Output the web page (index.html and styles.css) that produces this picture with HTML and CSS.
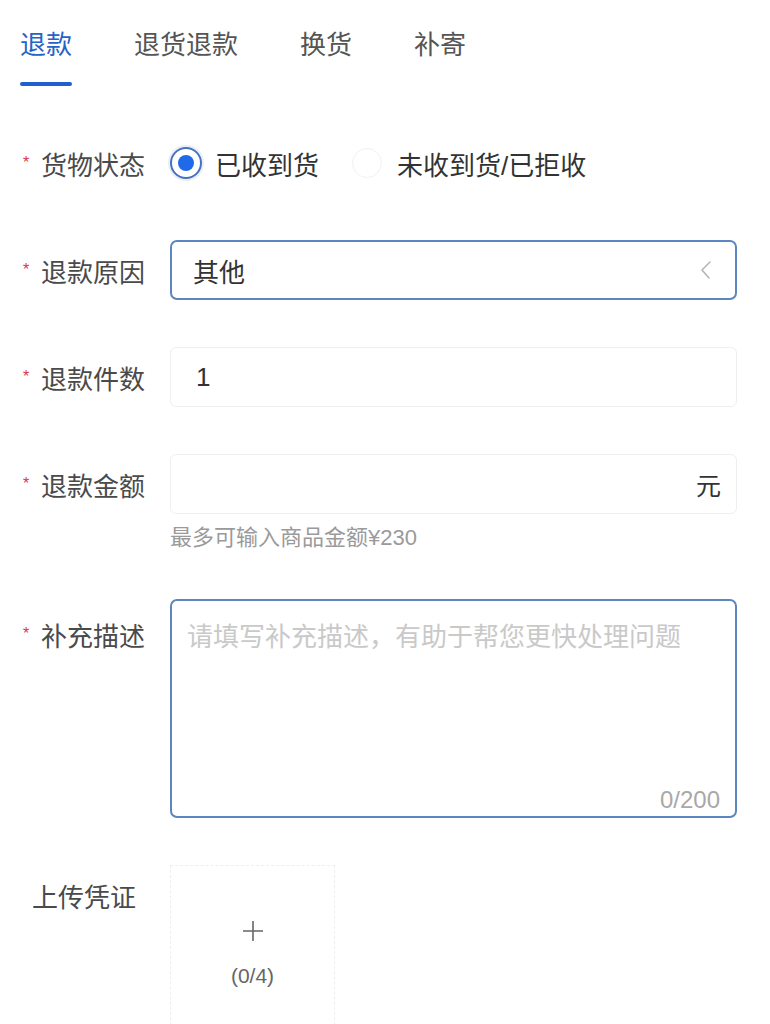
FILE: index.html
```html
<!DOCTYPE html>
<html lang="zh-CN">
<head>
<meta charset="utf-8">
<title>申请售后</title>
<link rel="stylesheet" href="styles.css">
</head>
<body>
<div class="page">
  <nav class="tabs">
    <div class="tab active">退款</div>
    <div class="tab">退货退款</div>
    <div class="tab">换货</div>
    <div class="tab">补寄</div>
  </nav>

  <form class="form">
    <div class="row">
      <div class="label"><i class="star">*</i>货物状态</div>
      <div class="control radios">
        <span class="radio checked"><span class="dot"></span>已收到货</span>
        <span class="radio"><span class="dot"></span>未收到货/已拒收</span>
      </div>
    </div>

    <div class="row">
      <div class="label"><i class="star">*</i>退款原因</div>
      <div class="control">
        <div class="select">
          <span>其他</span>
          <svg class="chev" width="12" height="20" viewBox="0 0 12 20"><polyline points="10,2 2,10 9,18" fill="none" stroke="#b5b5b5" stroke-width="1.6" stroke-linecap="round" stroke-linejoin="round"/></svg>
        </div>
      </div>
    </div>

    <div class="row">
      <div class="label"><i class="star">*</i>退款件数</div>
      <div class="control">
        <div class="input"><span>1</span></div>
      </div>
    </div>

    <div class="row">
      <div class="label"><i class="star">*</i>退款金额</div>
      <div class="control">
        <div class="input"><span></span><span class="unit">元</span></div>
        <div class="hint">最多可输入商品金额¥230</div>
      </div>
    </div>

    <div class="row">
      <div class="label label-top"><i class="star">*</i>补充描述</div>
      <div class="control">
        <div class="textarea">
          <textarea placeholder="请填写补充描述，有助于帮您更快处理问题"></textarea>
          <span class="count">0/200</span>
        </div>
      </div>
    </div>

    <div class="row">
      <div class="label plain">上传凭证</div>
      <div class="control">
        <div class="upload">
          <svg class="plus" width="22" height="22" viewBox="0 0 22 22"><path d="M11 1v20M1 11h20" stroke="#666" stroke-width="1.6" fill="none"/></svg>
          <span class="upcount">(0/4)</span>
        </div>
      </div>
    </div>
  </form>
</div>
</body>
</html>
```

FILE: styles.css
```css
body {
  margin: 0;
  background: #ffffff;
  font-family: "Liberation Sans", "Noto Sans CJK SC", sans-serif;
  color: #333;
}

.page {
  padding: 0 33px 0 20px;
}

.tabs {
  display: flex;
  gap: 62px;
  padding-top: 29px;
}

.tab {
  display: flex;
  flex-direction: column;
  font-size: 26px;
  line-height: 32px;
  color: #555;
}

.tab::after {
  content: "";
  height: 4px;
  margin-top: 21px;
  border-radius: 2px;
  background: transparent;
}

.tab.active {
  color: #2563c9;
}

.tab.active::after {
  background: #1f5fce;
}

.form {
  margin-top: 47px;
  display: flex;
  flex-direction: column;
  gap: 47px;
}

.row {
  display: grid;
  grid-template-columns: 150px 1fr;
}

.label {
  display: flex;
  align-items: center;
  height: 60px;
  font-size: 26px;
  color: #4a4a4a;
  white-space: nowrap;
}

.label-top {
  padding-top: 5px;
}

.label.plain {
  padding-left: 12px;
}

.star {
  width: 21px;
  font-style: normal;
  font-size: 16px;
  color: #e0344c;
  padding-left: 3px;
  box-sizing: border-box;
}

.control {
  display: flex;
  flex-direction: column;
}

.radios {
  flex-direction: row;
  align-items: center;
  height: 60px;
}

.radio {
  display: flex;
  align-items: center;
  font-size: 26px;
  color: #333;
}

.radio .dot {
  width: 30px;
  height: 30px;
  box-sizing: border-box;
  border-radius: 50%;
  border: 1px solid #f1f1f1;
  margin-right: 15px;
  margin-left: 33px;
}

.radio.checked .dot {
  width: 32px;
  height: 32px;
  margin-left: 0;
  margin-right: 13px;
  border: 2px solid #4572c0;
  box-shadow: 0 0 0 2px rgba(70, 115, 195, 0.12);
  display: flex;
  align-items: center;
  justify-content: center;
}

.radio.checked .dot::after {
  content: "";
  width: 16px;
  height: 16px;
  border-radius: 50%;
  background: #1f6ae8;
}

.select {
  height: 60px;
  box-sizing: border-box;
  border: 2px solid #5b86bf;
  border-radius: 7px;
  display: flex;
  align-items: center;
  justify-content: space-between;
  padding: 0 23px 0 21px;
  font-size: 26px;
  color: #333;
}

.input {
  height: 60px;
  box-sizing: border-box;
  border: 1px solid #efefef;
  border-radius: 6px;
  display: flex;
  align-items: center;
  justify-content: space-between;
  padding: 0 15px 0 25px;
  font-size: 26px;
  color: #333;
}

.unit {
  font-size: 25px;
}

.hint {
  margin-top: 10px;
  font-size: 22px;
  line-height: 28px;
  color: #9a9a9a;
}

.textarea {
  height: 219px;
  box-sizing: border-box;
  border: 2px solid #5b86bf;
  border-radius: 7px;
  display: flex;
  flex-direction: column;
  padding: 18px 15px 2px 15px;
}

.textarea textarea {
  flex: 1;
  border: none;
  outline: none;
  resize: none;
  padding: 0;
  margin: 0;
  font-family: "Liberation Sans", "Noto Sans CJK SC", sans-serif;
  font-size: 26px;
  line-height: 36px;
  color: #333;
  background: transparent;
}

.textarea textarea::placeholder {
  color: #c9c9c9;
}

.count {
  align-self: flex-end;
  font-size: 24px;
  line-height: 28px;
  color: #a8a8a8;
}

.upload {
  width: 165px;
  height: 165px;
  box-sizing: border-box;
  border: 1px dashed #eeeeee;
  display: flex;
  flex-direction: column;
  align-items: center;
  padding-top: 54px;
}

.upcount {
  margin-top: 21px;
  font-size: 21px;
  line-height: 26px;
  color: #666;
}
```
